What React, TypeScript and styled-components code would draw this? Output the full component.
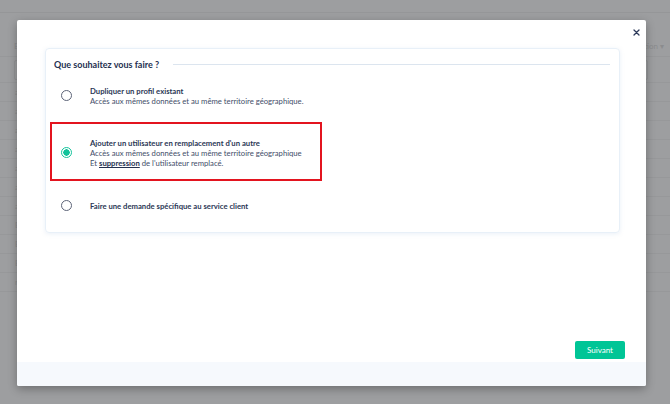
import React, { FC, useState } from 'react';
import styled, { createGlobalStyle } from 'styled-components';

const GlobalStyle = createGlobalStyle`
  html, body {
    margin: 0;
    padding: 0;
  }
  body {
    font-family: Lato, "Open Sans", Arial, sans-serif;
    background: #9d9ea0;
  }
`;

type OptionT = { id: string; title: string; lines: React.ReactNode[] };

const bgRows = ['a', 'a', 'a', 'a', 'a', 'a', 'a', 'E', 'E', 'E', 'r'];

const App: FC = () => {
  const [selected, setSelected] = useState('rep');

  const options: OptionT[] = [
    {
      id: 'dup',
      title: 'Dupliquer un profil existant',
      lines: ['Accès aux mêmes données et au même territoire géographique.'],
    },
    {
      id: 'rep',
      title: "Ajouter un utilisateur en remplacement d'un autre",
      lines: [
        'Accès aux mêmes données et au même territoire géographique',
        <>
          Et <Strong>suppression</Strong> de l'utilisateur remplacé.
        </>,
      ],
    },
    {
      id: 'sav',
      title: 'Faire une demande spécifique au service client',
      lines: [],
    },
  ];

  return (
    <Page>
      <GlobalStyle />
      <Backdrop>
        <TopBar />
        <HeadRow>
          <HeadCell>E</HeadCell>
          <HeadCell>ation ▾</HeadCell>
        </HeadRow>
        <FilterRow>
          <FilterBox />
          <FilterBox />
        </FilterRow>
        {bgRows.map((r, i) => (
          <BgRow key={i}>{r}</BgRow>
        ))}
      </Backdrop>

      <Modal>
        <CloseButton aria-label="Fermer">
          <svg width="7" height="7" viewBox="0 0 7 7">
            <path d="M1 1 L6 6 M6 1 L1 6" stroke="#2d3a5a" strokeWidth="1.3" strokeLinecap="round" />
          </svg>
        </CloseButton>
        <Body>
          <Card>
            <CardHeader>
              <CardTitle>Que souhaitez vous faire ?</CardTitle>
              <HeaderRule />
            </CardHeader>
            <OptionList>
              {options.map((o) => (
                <Option
                  key={o.id}
                  $highlight={o.id === 'rep'}
                  $single={o.lines.length === 0}
                  onClick={() => setSelected(o.id)}
                >
                  <Radio $checked={selected === o.id} />
                  <OptionText>
                    <OptionTitle>{o.title}</OptionTitle>
                    {o.lines.map((l, i) => (
                      <OptionLine key={i}>{l}</OptionLine>
                    ))}
                  </OptionText>
                </Option>
              ))}
            </OptionList>
          </Card>
          <Actions>
            <PrimaryButton>Suivant</PrimaryButton>
          </Actions>
        </Body>
        <Footer />
      </Modal>
    </Page>
  );
};

const Page = styled.div`
  position: relative;
  width: 670px;
  height: 404px;
  overflow: hidden;
  background: #9d9ea0;
`;

const Backdrop = styled.div`
  display: flex;
  flex-direction: column;
  color: #8b8c8e;
  font-size: 8px;
`;

const TopBar = styled.div`
  height: 12px;
  border-bottom: 1px solid #959698;
`;

const HeadRow = styled.div`
  display: flex;
  justify-content: space-between;
  align-items: center;
  height: 20px;
  margin-top: 23px;
  padding: 0 6px 0 14px;
  border-bottom: 1px solid #97989a;
`;

const HeadCell = styled.span`
  font-size: 8px;
`;

const FilterRow = styled.div`
  display: flex;
  justify-content: space-between;
  align-items: center;
  height: 25px;
  padding: 0 22px 0 14px;
  border-bottom: 1px solid #97989a;
`;

const FilterBox = styled.div`
  width: 30px;
  height: 18px;
  border: 1px solid #939496;
  border-radius: 2px;
`;

const BgRow = styled.div`
  height: 18px;
  line-height: 18px;
  padding-left: 15px;
  border-bottom: 1px solid #97989a;
`;

const Modal = styled.div`
  position: absolute;
  left: 17px;
  top: 20px;
  width: 629px;
  height: 366px;
  display: flex;
  flex-direction: column;
  background: #ffffff;
  border-radius: 2px;
  box-shadow: 0 3px 10px rgba(0, 0, 0, 0.3);
`;

const CloseButton = styled.button`
  position: absolute;
  top: 6px;
  right: 4px;
  width: 12px;
  height: 12px;
  padding: 0;
  border: none;
  background: none;
  display: flex;
  align-items: center;
  justify-content: center;
  cursor: pointer;
`;

const Body = styled.div`
  flex: 1;
  display: flex;
  flex-direction: column;
  justify-content: space-between;
  padding: 28px 21px 3px 28px;
`;

const Card = styled.div`
  margin-right: 5px;
  padding: 9px 9px 7px 4px;
  border: 1px solid #e8f0f8;
  border-radius: 4px;
  box-shadow: 0 1px 4px rgba(170, 195, 225, 0.25);
`;

const CardHeader = styled.div`
  display: flex;
  align-items: center;
  gap: 14px;
  height: 12px;
  padding-left: 4px;
`;

const CardTitle = styled.span`
  font-size: 9px;
  font-weight: 700;
  color: #24304f;
  white-space: nowrap;
`;

const HeaderRule = styled.div`
  flex: 1;
  height: 1px;
  background: #dce5ef;
`;

const OptionList = styled.div`
  display: flex;
  flex-direction: column;
  gap: 3px;
`;

const Option = styled.div<{ $highlight?: boolean; $single?: boolean }>`
  display: flex;
  align-items: center;
  gap: 18px;
  width: fit-content;
  padding: ${({ $single }) => ($single ? '15px 18px 12px 9px' : '14px 18px 11px 9px')};
  border: 2px solid ${({ $highlight }) => ($highlight ? '#e3141f' : 'transparent')};
  cursor: pointer;
`;

const Radio = styled.span<{ $checked?: boolean }>`
  box-sizing: border-box;
  flex: none;
  width: 11px;
  height: 11px;
  margin-top: -2px;
  border-radius: 50%;
  border: 1.3px solid ${({ $checked }) => ($checked ? '#13c39b' : '#5d6478')};
  background: ${({ $checked }) => ($checked ? 'radial-gradient(circle, #13c39b 0 3px, #fff 3.4px)' : '#fff')};
`;

const OptionText = styled.div`
  display: flex;
  flex-direction: column;
`;

const OptionTitle = styled.span`
  font-size: 7.7px;
  line-height: 10px;
  font-weight: 700;
  color: #2b3755;
  white-space: nowrap;
`;

const OptionLine = styled.span`
  font-size: 7.7px;
  line-height: 10px;
  color: #434e69;
  white-space: nowrap;
`;

const Strong = styled.b`
  font-weight: 700;
  color: #24304f;
  text-decoration: underline;
`;

const Actions = styled.div`
  display: flex;
  justify-content: flex-end;
`;

const PrimaryButton = styled.button`
  width: 50px;
  height: 18px;
  padding: 0;
  border: none;
  border-radius: 2px;
  background: #00c596;
  color: #ffffff;
  font-family: Lato, "Open Sans", Arial, sans-serif;
  font-size: 8px;
  cursor: pointer;
`;

const Footer = styled.div`
  height: 24px;
  background: #f6f9fd;
  border-radius: 0 0 2px 2px;
`;

export default App;
